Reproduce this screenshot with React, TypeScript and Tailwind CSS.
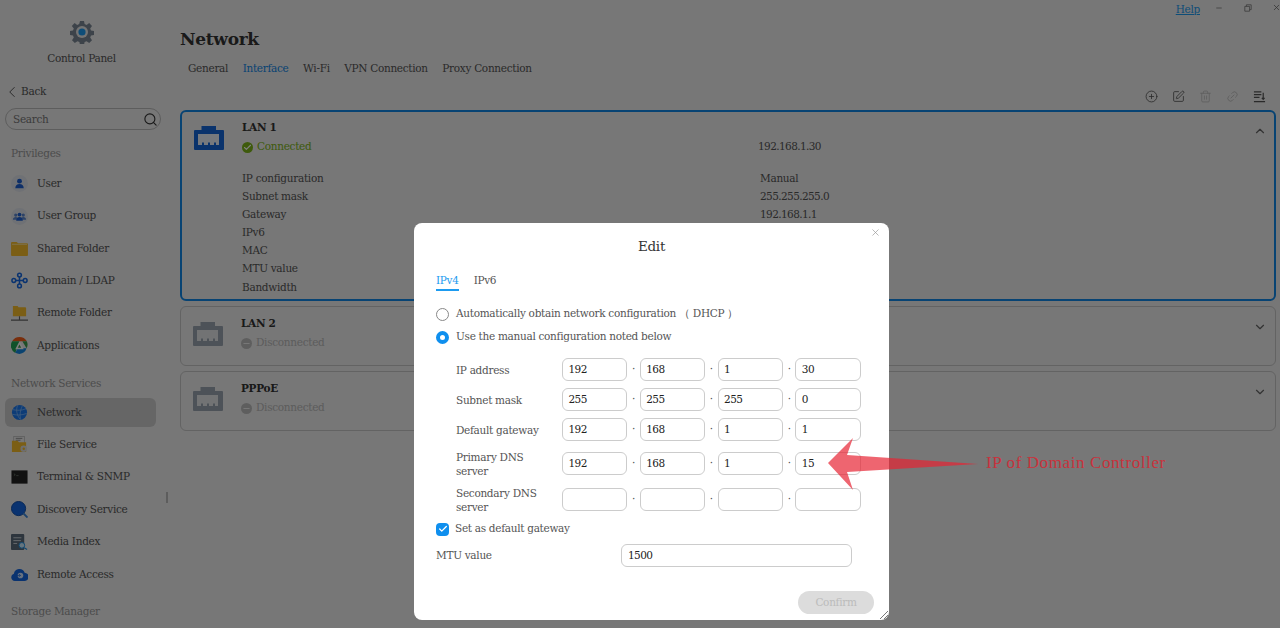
import { ChevronDown, ChevronLeft, ChevronUp, CirclePlus, Link2, Search, SquarePen, Trash2, X, Minus, Check } from 'lucide-react';
import type { ReactNode } from 'react';

const font = { fontFamily: '"DejaVu Serif", serif' };

function UserIcon() {
  return (
    <svg viewBox="0 0 18 18" className="h-[17px] w-[17px]">
      <circle cx="9" cy="9" r="9" fill="#dfe3ea" />
      <circle cx="9" cy="6.500" r="2.600" fill="#1d5fd0" />
      <path d="M4.500 14c0-3 2-4.500 4.500-4.500s4.500 1.500 4.500 4.500z" fill="#1d5fd0" />
    </svg>
  );
}

function GroupIcon() {
  return (
    <svg viewBox="0 0 18 18" className="h-[17px] w-[17px]">
      <circle cx="9" cy="9" r="9" fill="#dfe3ea" />
      <circle cx="5" cy="7.500" r="1.700" fill="#5b86cf" />
      <circle cx="13" cy="7.500" r="1.700" fill="#5b86cf" />
      <path d="M2 12.500c0-2 1.300-3 3-3s3 1 3 3zM10 12.500c0-2 1.300-3 3-3s3 1 3 3z" fill="#5b86cf" />
      <circle cx="9" cy="7" r="2" fill="#1d5fd0" />
      <path d="M5.500 13.500c0-2.500 1.500-4 3.500-4s3.500 1.500 3.500 4z" fill="#1d5fd0" />
    </svg>
  );
}

function FolderIcon() {
  return (
    <svg viewBox="0 0 18 16" className="h-[15px] w-[17px]">
      <path d="M0 2a1 1 0 0 1 1-1h5l1.500 1.500H17a1 1 0 0 1 1 1V15a1 1 0 0 1-1 1H1a1 1 0 0 1-1-1z" fill="#f6bd2b" />
      <rect x="1" y="3" width="16" height="1" fill="#fbe39a" />
    </svg>
  );
}

function DomainIcon() {
  return (
    <svg viewBox="0 0 18 18" className="h-[17px] w-[17px]" fill="none" stroke="#1467e0" strokeWidth="1.600">
      <circle cx="9" cy="3.200" r="2" />
      <circle cx="9" cy="14.800" r="2" />
      <circle cx="3" cy="9" r="2" />
      <circle cx="15" cy="9" r="2" />
      <path d="M9 5.200v7.600M5 9h8" />
    </svg>
  );
}

function RemoteFolderIcon() {
  return (
    <svg viewBox="0 0 18 18" className="h-[17px] w-[17px]">
      <path d="M2 1h5l1 1.500h7a1 1 0 0 1 1 1V12H2z" fill="#f6bd2b" />
      <path d="M9 12v4M0 16h18" stroke="#666" strokeWidth="1.200" />
    </svg>
  );
}

function AppsIcon() {
  return (
    <svg viewBox="0 0 18 18" className="h-[17px] w-[17px]">
      <path d="M9 0a9 9 0 0 1 7.800 4.500H1.200A9 9 0 0 1 9 0z" fill="#f25c19" />
      <path d="M1.200 4.500h8L4.500 17A9 9 0 0 1 1.200 4.500z" fill="#23a455" />
      <path d="M9 18a9 9 0 0 1-4.500-1.200L7 12h9.500A9 9 0 0 1 9 18z" fill="#1487e0" />
      <path d="M16.800 4.500A9 9 0 0 1 16.500 12L12 4.500z" fill="#3c9d4e" />
      <path d="M9 4.500l4.500 8.500h-9z" fill="#fff" />
      <path d="M9 8l1.800 3.300H7.200z" fill="#3c9d4e" />
    </svg>
  );
}

function NetworkIcon() {
  return (
    <svg viewBox="0 0 18 18" className="h-[17px] w-[17px]">
      <circle cx="9" cy="9" r="8" fill="#1b78ee" />
      <path d="M2 6c4 1 9 1 14-1M1.500 11c5 1 10 1 15-1M7 1.500C5 6 6 12 10 16.500M12 2c-2 4-3 9-2 14" fill="none" stroke="#8fc2fa" strokeWidth="0.700" />
    </svg>
  );
}

function FileServiceIcon() {
  return (
    <svg viewBox="0 0 18 18" className="h-[17px] w-[17px]">
      <rect x="3" y="0.500" width="11" height="9" fill="#eee" stroke="#999" strokeWidth="0.500" />
      <path d="M5 2.500h7M5 4.500h5" stroke="#777" strokeWidth="0.800" />
      <path d="M1 5h6l1.500 1.500H16V17H1z" fill="#f6bd2b" />
      <circle cx="13.500" cy="13.500" r="3.500" fill="#ddd" />
      <circle cx="13.500" cy="13.500" r="1.300" fill="#f6bd2b" />
    </svg>
  );
}

function TerminalIcon() {
  return (
    <svg viewBox="0 0 18 16" className="h-[15px] w-[17px]">
      <rect width="18" height="15" rx="1.500" fill="#777" />
      <rect x="1" y="1" width="16" height="13" fill="#222" />
      <path d="M3 4l1.500 1L3 6M5.500 6H8" stroke="#9a9" strokeWidth="0.500" fill="none" />
    </svg>
  );
}

function DiscoveryIcon() {
  return (
    <svg viewBox="0 0 18 18" className="h-[17px] w-[17px]">
      <circle cx="8" cy="8" r="7.500" fill="#1467e0" stroke="#0c4aa8" />
      <path d="M13 13l4.500 4.500" stroke="#3a86d8" strokeWidth="2" />
    </svg>
  );
}

function MediaIndexIcon() {
  return (
    <svg viewBox="0 0 18 18" className="h-[17px] w-[17px]">
      <rect width="14" height="17" rx="1" fill="#5b6b7a" />
      <path d="M2.500 4H11M2.500 7h8M2.500 10h4" stroke="#cfd6dc" strokeWidth="1" />
      <circle cx="11.500" cy="12" r="3" fill="#cdeafc" stroke="#1a8fe6" strokeWidth="1" />
      <path d="M14 14.500l3 2" stroke="#1a8fe6" strokeWidth="1.200" />
    </svg>
  );
}

function RemoteAccessIcon() {
  return (
    <svg viewBox="0 0 18 16" className="h-[15px] w-[17px]">
      <path d="M4 15a4 4 0 0 1-1-7.800A6 6 0 0 1 14.500 6 4.500 4.500 0 0 1 14 15z" fill="#1467e0" />
      <circle cx="10" cy="9" r="3" fill="#cfe3ff" />
      <path d="M5.500 9H10M8.500 7.500L10 9l-1.500 1.500" stroke="#1467e0" strokeWidth="0.800" fill="none" />
    </svg>
  );
}

function PortIcon({ color, inner }: { color: string; inner: string }) {
  return (
    <svg viewBox="0 0 30 24" className="h-[24px] w-[30px]">
      <path d="M7.500 0h14.500v4h7a1 1 0 0 1 1 1v18a1 1 0 0 1-1 1H1a1 1 0 0 1-1-1V5a1 1 0 0 1 1-1h6.500z" fill={color} />
      <rect x="4" y="8" width="21" height="11" fill={inner} />
      <path d="M8 16.500h2V19H8zM14 16.500h2V19h-2zM20 16.500h2V19h-2z" fill={color} />
    </svg>
  );
}

const navGroups: { title: string; items: { label: string; icon: ReactNode; active?: boolean }[] }[] = [
  {
    title: 'Privileges',
    items: [
      { label: 'User', icon: <UserIcon /> },
      { label: 'User Group', icon: <GroupIcon /> },
      { label: 'Shared Folder', icon: <FolderIcon /> },
      { label: 'Domain / LDAP', icon: <DomainIcon /> },
      { label: 'Remote Folder', icon: <RemoteFolderIcon /> },
      { label: 'Applications', icon: <AppsIcon /> },
    ],
  },
  {
    title: 'Network Services',
    items: [
      { label: 'Network', icon: <NetworkIcon />, active: true },
      { label: 'File Service', icon: <FileServiceIcon /> },
      { label: 'Terminal & SNMP', icon: <TerminalIcon /> },
      { label: 'Discovery Service', icon: <DiscoveryIcon /> },
      { label: 'Media Index', icon: <MediaIndexIcon /> },
      { label: 'Remote Access', icon: <RemoteAccessIcon /> },
    ],
  },
];

function Sidebar() {
  return (
    <aside className="relative flex h-full w-[168px] shrink-0 flex-col overflow-hidden">
      <div className="flex flex-col items-center pr-[5px] pt-[20px]">
        <svg viewBox="0 0 24 24" className="h-[24px] w-[24px]">
          <path
            d="M10 1h4l.6 3.100 2 .8 2.600-1.800 2.800 2.800-1.800 2.600.8 2 3 .5v4l-3 .6-.8 2 1.800 2.600-2.800 2.800-2.600-1.800-2 .8-.6 3.100h-4l-.6-3.100-2-.8-2.600 1.800-2.800-2.800 1.800-2.600-.8-2-3-.6v-4l3-.5.8-2L1.800 5.900l2.800-2.800 2.600 1.800 2-.8z"
            fill="#7b8794"
          />
          <circle cx="12" cy="12" r="6" fill="#e8e8e8" />
          <circle cx="12" cy="12" r="3.600" fill="#1d9bf0" />
        </svg>
        <div className="mt-[6px] text-[10.500px] leading-[16px] text-[#555]">Control Panel</div>
      </div>
      <div className="mt-[18px] flex h-[16px] items-center pl-[3px] text-[10.500px] text-[#555]">
        <ChevronLeft className="h-[18px] w-[18px]" strokeWidth={1.300} />
        <span>Back</span>
      </div>
      <div className="ml-[5px] mt-[8px] flex h-[22px] w-[156px] items-center justify-between rounded-full border border-[#bbb] pl-[7px] pr-[2px] text-[10.500px] text-[#777]">
        <span className="pt-[1px]">Search</span>
        <Search className="h-[15px] w-[15px] text-[#333]" strokeWidth={1.800} />
      </div>
      {navGroups.map((group, i) => (
        <div key={group.title} className={i === 0 ? 'mt-[15px]' : 'mt-[11px]'}>
          <div className="h-[16px] pl-[11px] text-[10.500px] leading-[16px] text-[#999]">{group.title}</div>
          <div className={`flex flex-col ${i === 0 ? 'mt-[8.500px]' : 'mt-[7.500px]'}`}>
            {group.items.map((item) => (
              <div
                key={item.label}
                className={`mb-[4px] ml-[5px] flex h-[28.400px] w-[151px] items-center rounded-md pl-[4.500px] text-[10.500px] text-[#555] ${
                  item.active ? 'bg-[#cdcdcd]' : ''
                }`}
              >
                <span className="flex w-[20px] justify-center">{item.icon}</span>
                <span className="ml-[7.500px]">{item.label}</span>
              </div>
            ))}
          </div>
        </div>
      ))}
      <div className="mt-[10px] h-[16px] pl-[11px] text-[10.500px] leading-[16px] text-[#999]">Storage Manager</div>
    </aside>
  );
}

function LanCard({ name, connected, expanded }: { name: string; connected?: boolean; expanded?: boolean }) {
  return (
    <div
      className={`relative rounded-md ${
        expanded ? 'h-[191px] border-2 border-[#0f86e6]' : 'h-[60px] border border-[#c6c6c6]'
      }`}
    >
      <div className="flex">
        <div className={`ml-[12px] ${expanded ? 'mt-[14px]' : 'mt-[15px]'}`}>
          <PortIcon color={connected ? '#1466d8' : '#9aa5b0'} inner={connected ? '#ecf2fa' : '#e4e6e8'} />
        </div>
        <div className="ml-[18px] flex-1">
          <div className={`text-[10.500px] font-bold leading-[16px] text-[#333] ${expanded ? 'mt-[7px]' : 'mt-[8px]'}`}>{name}</div>
          <div className="mt-[4px] flex h-[16px] items-center text-[10.500px]">
            {connected ? (
              <span className="flex h-[11px] w-[11px] items-center justify-center rounded-full bg-[#7cb518]">
                <Check className="h-[9px] w-[9px] text-white" strokeWidth={3} />
              </span>
            ) : (
              <span className="flex h-[11px] w-[11px] items-center justify-center rounded-full bg-[#bdbdbd]">
                <Minus className="h-[9px] w-[9px] text-[#eee]" strokeWidth={3} />
              </span>
            )}
            <span className={`ml-[4px] ${connected ? 'text-[#7cb518]' : 'text-[#b9b9b9]'}`}>
              {connected ? 'Connected' : 'Disconnected'}
            </span>
            {connected && <span className="absolute left-[576px] tracking-[-0.600px] text-[#555]">192.168.1.30</span>}
          </div>
          {expanded && (
            <div className="mt-[14px] grid grid-cols-[518px_1fr] text-[10.500px] leading-[18.100px] text-[#555]">
              <span>IP configuration</span>
              <span>Manual</span>
              <span>Subnet mask</span>
              <span className="tracking-[-0.600px]">255.255.255.0</span>
              <span>Gateway</span>
              <span className="tracking-[-0.600px]">192.168.1.1</span>
              <span className="col-span-2">IPv6</span>
              <span className="col-span-2">MAC</span>
              <span className="col-span-2">MTU value</span>
              <span className="col-span-2">Bandwidth</span>
            </div>
          )}
        </div>
      </div>
      {expanded ? (
        <ChevronUp className="absolute right-[7px] top-[12px] h-[14px] w-[14px] text-[#666]" />
      ) : (
        <ChevronDown className="absolute right-[8px] top-[13px] h-[14px] w-[14px] text-[#666]" />
      )}
    </div>
  );
}

function SortIcon() {
  return (
    <svg viewBox="0 0 14 14" className="h-[13px] w-[13px]" fill="none" stroke="#555" strokeWidth="1.300">
      <path d="M1 2h8M1 5h8M1 8h6M1 12.500h12M11 3v7M9.500 8.500L11 10l1.500-1.500" />
    </svg>
  );
}

function Main() {
  return (
    <main className="relative flex-1 pl-[12px] pr-[4px]">
      <div className="flex h-[18px] items-center justify-end text-[#666]">
        <a className="absolute right-[80px] top-[1px] text-[10.500px] leading-[16px] text-[#1d9bf0] underline">Help</a>
        <Minus className="absolute right-[57px] top-[4px] h-[8px] w-[8px]" />
        <svg viewBox="0 0 10 10" className="absolute right-[28px] top-[4px] h-[8px] w-[8px]" fill="none" stroke="#777">
          <path d="M1 3h6v6H1zM3 3V1h6v6H7" />
        </svg>
        <X className="absolute right-[-1px] top-[3px] h-[9px] w-[9px]" />
      </div>
      <h1 className="mt-[9px] text-[17px] font-bold leading-[24px] text-[#333]">Network</h1>
      <div className="ml-[8px] mt-[9px] flex gap-[14.500px] text-[10.500px] leading-[16px] text-[#555]">
        <span>General</span>
        <span className="text-[#0f86e6]">Interface</span>
        <span>Wi-Fi</span>
        <span>VPN Connection</span>
        <span>Proxy Connection</span>
      </div>
      <div className="mt-[13px] flex h-[14px] items-center justify-end gap-[14px] pr-[10px]">
        <CirclePlus className="h-[13px] w-[13px] text-[#555]" strokeWidth={1.500} />
        <SquarePen className="h-[13px] w-[13px] text-[#555]" strokeWidth={1.500} />
        <Trash2 className="h-[13px] w-[13px] text-[#bbb]" strokeWidth={1.500} />
        <Link2 className="h-[13px] w-[13px] -rotate-45 text-[#bbb]" strokeWidth={1.500} />
        <SortIcon />
      </div>
      <div className="mt-[7px] flex flex-col gap-[5px]">
        <LanCard name="LAN 1" connected expanded />
        <LanCard name="LAN 2" />
        <LanCard name="PPPoE" />
      </div>
    </main>
  );
}

function IpRow({ label, values, className }: { label: string; values: string[]; className: string }) {
  return (
    <div className={`flex items-center pl-[42px] ${className}`}>
      <div className="mr-[16px] w-[90px] text-[10.500px] leading-[14px] text-[#555]">{label}</div>
      <div className="flex">
        {values.map((v, i) => (
          <div key={i} className="flex items-center">
            {i > 0 && <span className="flex w-[12.400px] justify-center text-[10.500px] text-[#555]">·</span>}
            <div className="flex h-[23px] w-[65.400px] items-center rounded-md border border-[#ccc] pl-[5.500px] text-[10.500px] tracking-[-0.600px] text-[#222]">
              {v}
            </div>
          </div>
        ))}
      </div>
    </div>
  );
}

function EditDialog() {
  return (
    <div className="absolute left-[414px] top-[223px] h-[397px] w-[475px] overflow-hidden rounded-lg bg-white">
      <X className="absolute right-[8.500px] top-[3.500px] h-[11px] w-[11px] text-[#999]" strokeWidth={1.500} />
      <div className="pt-[14px] text-center text-[13.500px] leading-[18px] text-[#333]">Edit</div>
      <div className="ml-[22px] mt-[17px] flex gap-[15px] text-[10.500px] leading-[16px]">
        <span className="border-b-2 border-[#1d9bf0] pb-[1px] text-[#1d9bf0]">IPv4</span>
        <span className="text-[#555]">IPv6</span>
      </div>
      <div className="ml-[22px] mt-[15px] flex h-[16px] items-center text-[10.500px] text-[#555]">
        <span className="h-[13px] w-[13px] rounded-full border border-[#888]" />
        <span className="ml-[7px]">Automatically obtain network configuration （ DHCP ）</span>
      </div>
      <div className="ml-[22px] mt-[7px] flex h-[16px] items-center text-[10.500px] text-[#555]">
        <span className="h-[13px] w-[13px] rounded-full border-[4px] border-[#0f8fee]" />
        <span className="ml-[7px]">Use the manual configuration noted below</span>
      </div>
      <IpRow label="IP address" values={['192', '168', '1', '30']} className="mt-[13px]" />
      <IpRow label="Subnet mask" values={['255', '255', '255', '0']} className="mt-[7px]" />
      <IpRow label="Default gateway" values={['192', '168', '1', '1']} className="mt-[7px]" />
      <IpRow label="Primary DNS server" values={['192', '168', '1', '15']} className="mt-[8.500px]" />
      <IpRow label="Secondary DNS server" values={['', '', '', '']} className="mt-[8px]" />
      <div className="ml-[22px] mt-[7.500px] flex h-[16px] items-center text-[10.500px] text-[#555]">
        <span className="flex h-[13px] w-[13px] items-center justify-center rounded-sm bg-[#0f8fee]">
          <Check className="h-[10px] w-[10px] text-white" strokeWidth={3} />
        </span>
        <span className="ml-[6px]">Set as default gateway</span>
      </div>
      <div className="ml-[22px] mt-[7px] flex items-center text-[10.500px] text-[#555]">
        <span className="w-[185px]">MTU value</span>
        <div className="flex h-[23px] w-[231px] items-center rounded-md border border-[#ccc] pl-[6px] tracking-[-0.600px] text-[#222]">1500</div>
      </div>
      <button className="absolute bottom-[6px] right-[15px] h-[23px] w-[76px] rounded-full bg-[#dcdcdc] text-[10.500px] text-[#bbb]">
        Confirm
      </button>
      <svg viewBox="0 0 10 10" className="absolute bottom-0 right-0 h-[10px] w-[10px]" fill="none" stroke="#555" strokeWidth="0.800">
        <path d="M1 9l8-8M5 9l4-4" />
      </svg>
    </div>
  );
}

export default function App() {
  return (
    <div className="relative flex h-[628px] w-[1280px] overflow-hidden bg-[#eeeeee] tracking-[-0.300px]" style={font}>
      <Sidebar />
      <Main />
      <div className="absolute left-[166px] top-[492px] h-[11px] w-[2px] bg-[#bbb]" />
      <div className="absolute inset-0 bg-black/50" />
      <EditDialog />
      <svg viewBox="0 0 160 60" className="absolute left-[825px] top-[434px] h-[60px] w-[160px]">
        <path d="M3 29L28 4L22 21L153 30L22 38L28 56Z" fill="rgb(231,36,51)" fillOpacity="0.7" />
      </svg>
      <div className="absolute left-[986px] top-[453px] text-[17px] leading-[20px] tracking-[0.600px] text-[#c8323c]" style={{ fontFamily: '"Liberation Serif", serif' }}>
        IP of Domain Controller
      </div>
    </div>
  );
}
